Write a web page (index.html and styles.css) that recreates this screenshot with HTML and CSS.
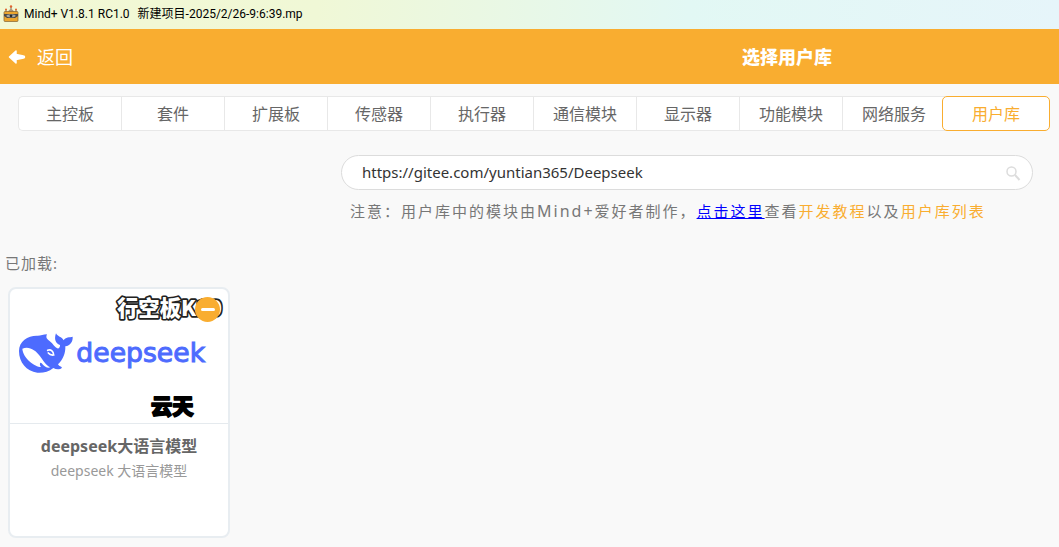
FILE: index.html
```html
<!DOCTYPE html>
<html lang="zh-CN">
<head>
<meta charset="utf-8">
<title>Mind+ V1.8.1 RC1.0</title>
<link rel="stylesheet" href="styles.css">
</head>
<body>
<div class="titlebar">
  <svg class="app-icon" viewBox="0 0 16 17" aria-hidden="true">
    <path d="M3 7V4M8 6V2M13 7V4" stroke="#7b6a54" stroke-width="1"/>
    <path d="M5 7l1-2 2-1 2 1 1 2z" fill="#a9957a"/>
    <circle cx="3" cy="4.500" r="1" fill="#e0642f"/><circle cx="8" cy="1.500" r="1.200" fill="#e0642f"/><circle cx="13" cy="4.500" r="1" fill="#e0642f"/>
    <rect x="1" y="6.500" width="14" height="10" rx="1" fill="#eba52d" stroke="#826231" stroke-width=".7"/>
    <path d="M1 9h14v2l-3 2H4l-3-2z" fill="#4c4a46"/>
    <ellipse cx="8" cy="10.800" rx="4.500" ry="1.500" fill="#a5a59c"/><circle cx="8" cy="10.800" r="1.400" fill="#25282b"/>
  </svg>
  <span class="app-name">Mind+ V1.8.1 RC1.0</span>
  <span>新建项目-2025/2/26-9:6:39.mp</span>
</div>
<header class="header">
  <button class="back" type="button">
    <svg class="back-icon" viewBox="0 0 18 16" aria-hidden="true"><path d="M1.500 8L8 2v3.500l7.500 1.500a1 1 0 010 2L8 10.500V14z" fill="#fff" stroke="#fff" stroke-width="1.500" stroke-linejoin="round"/></svg>
    <span>返回</span>
  </button>
  <h1 class="heading">选择用户库</h1>
</header>
<nav class="tabs">
  <button class="tab" type="button">主控板</button>
  <button class="tab" type="button">套件</button>
  <button class="tab" type="button">扩展板</button>
  <button class="tab" type="button">传感器</button>
  <button class="tab" type="button">执行器</button>
  <button class="tab" type="button">通信模块</button>
  <button class="tab" type="button">显示器</button>
  <button class="tab" type="button">功能模块</button>
  <button class="tab" type="button">网络服务</button>
  <button class="tab tab-active" type="button">用户库</button>
</nav>
<main>
  <form class="search">
    <input class="search-input" type="text" aria-label="搜索用户库" value="https://gitee.com/yuntian365/Deepseek">
    <button class="search-button" type="button" aria-label="搜索">
      <svg class="search-icon" viewBox="0 0 16 16" fill="none" stroke="#dcdcdc" aria-hidden="true"><circle cx="6.500" cy="6.500" r="4.500" stroke-width="1.500"/><path d="M10 10l4.500 5" stroke-width="2"/></svg>
    </button>
  </form>
  <p class="notice">注意：用户库中的模块由<span class="notice-brand">Mind+</span>爱好者制作，<a class="link-here" href="#here">点击这里</a>查看<a class="link" href="#tutorial">开发教程</a>以及<a class="link" href="#list">用户库列表</a></p>
  <h2 class="section-title">已加载:</h2>
  <article class="card">
    <svg class="cover" viewBox="30 30 654 399" role="img" aria-label="deepseek">
      <text class="cover-board" x="351" y="107">行空板K10</text>
      <path fill="#4d6bfe" d="M57 213C57 184 83 167 110 167C120 168 129 164 141 163C139 168 137 174 144 179C153 185 160 194 167 202C175 210 181 202 180 195C166 190 162 177 168 160C173 171 185 169 191 181C196 171 209 172 218 170C219 185 211 196 196 199C197 220 189 239 174 253C177 259 184 259 186 263C180 269 169 269 160 264C146 276 129 279 112 278C79 274 57 247 57 213Z"/>
      <path fill="#fff" d="M67 206C87 197 107 211 119 227C130 242 137 255 151 262C139 266 133 259 125 250C119 244 118 255 123 261C105 261 69 235 67 206Z"/>
      <path fill="none" stroke="#fff" stroke-width="5" stroke-linecap="round" d="M143 211C153 207 161 215 161 225C154 226 149 224 145 219"/>
      <text class="cover-brand" x="229" y="246">deepseek</text>
      <text class="cover-author" x="453" y="403">云天</text>
    </svg>
    <button class="remove" type="button" aria-label="移除"><span class="remove-bar"></span></button>
    <h3 class="card-title">deepseek大语言模型</h3>
    <p class="card-text">deepseek 大语言模型</p>
  </article>
</main>
</body>
</html>
```
FILE: styles.css
```css
* { box-sizing: border-box; }
body {
  margin: 0;
  background: #f9f9f9;
  color: #666;
  font-family: "Noto Sans", "Noto Sans CJK SC", sans-serif;
  font-size: 16px;
}
button, input { font: inherit; color: inherit; margin: 0; padding: 0; border: 0; background: none; }
button { cursor: pointer; }
.titlebar {
  display: flex;
  align-items: center;
  height: 29px;
  padding: 0 0 2px 3px;
  background: linear-gradient(90deg, #f2f8d4, #f0f8d6 30%, #e2f8f4 65%, #e6f5fa);
  color: #000;
  font-family: Roboto, "Noto Sans CJK SC", sans-serif;
  font-size: 12px;
  line-height: 16px;
}
.app-icon { width: 16px; height: 17px; margin-right: 5px; }
.app-name { margin-right: 8px; }
.header {
  display: flex;
  align-items: center;
  height: 55px;
  padding: 0 227px 0 8px;
  background: #f9ad30;
  color: #fff;
}
.back { display: flex; align-items: center; gap: 11px; font-size: 18px; line-height: 24px; }
.back-icon { width: 18px; height: 16px; }
.heading { margin: 0 0 0 auto; font-size: 18px; line-height: 24px; font-weight: 900; }
.tabs { display: flex; padding: 12px 9px 0 18px; }
.tab {
  flex: 1;
  height: 35px;
  border: 1px solid #e8e8e8;
  border-right: 0;
  background: #fff;
  line-height: 24px;
}
.tab:first-child { border-radius: 5px 0 0 5px; }
.tab-active {
  flex: 0 0 108px;
  margin-left: -3px;
  border: 1px solid #f9ad30;
  border-radius: 5px;
  color: #f9ad30;
}
.search {
  display: flex;
  align-items: center;
  height: 35px;
  margin: 24px 26px 0 341px;
  padding: 0 11px 0 20px;
  border: 1px solid #dcdcdc;
  border-radius: 18px;
  background: #fff;
}
.search-input { flex: 1; min-width: 0; height: 24px; padding-bottom: 2px; color: #333; font-size: 15px; outline: 0; }
.search-button { display: flex; }
.search-icon { width: 16px; height: 16px; }
.notice { margin: 9px 0 0 350px; color: #777; font-size: 15px; line-height: 24px; letter-spacing: 2px; white-space: nowrap; }
.notice-brand { font-size: 16px; }
.link-here { color: #00f; }
.link { color: #f9ad30; text-decoration: none; }
.section-title { margin: 28px 0 12px 5px; color: #777; font-size: 15px; line-height: 24px; font-weight: 400; letter-spacing: 1px; }
.card {
  position: relative;
  width: 222px;
  min-height: 251px;
  margin-left: 8px;
  border: 2px solid #e8edf1;
  border-radius: 8px;
  background: #fff;
  text-align: center;
}
.cover { display: block; width: 100%; padding-top: 1px; border-bottom: 1px solid #e5eaee; }
.cover-board { font: 900 64px "Noto Sans CJK SC", sans-serif; fill: #fff; stroke: #222; stroke-width: 10px; stroke-linejoin: round; paint-order: stroke; }
.cover-brand { font: 400 80px "DejaVu Sans", sans-serif; fill: #4d6bfe; stroke: #4d6bfe; stroke-width: 3px; }
.cover-author { font: 900 64px "Noto Sans CJK SC", sans-serif; fill: #000; stroke: #000; stroke-width: 5px; stroke-linejoin: round; }
.remove {
  position: absolute;
  top: 8px;
  right: 8px;
  display: flex;
  align-items: center;
  justify-content: center;
  width: 25px;
  height: 25px;
  border-radius: 50%;
  background: #f9ad30;
}
.remove-bar { width: 14px; height: 3px; border-radius: 2px; background: #fff; }
.card-title { margin: 9px 0 0; font-size: 16px; line-height: 26px; font-weight: 700; }
.card-text { margin: 0; color: #999; font-size: 14px; line-height: 24px; }
```
